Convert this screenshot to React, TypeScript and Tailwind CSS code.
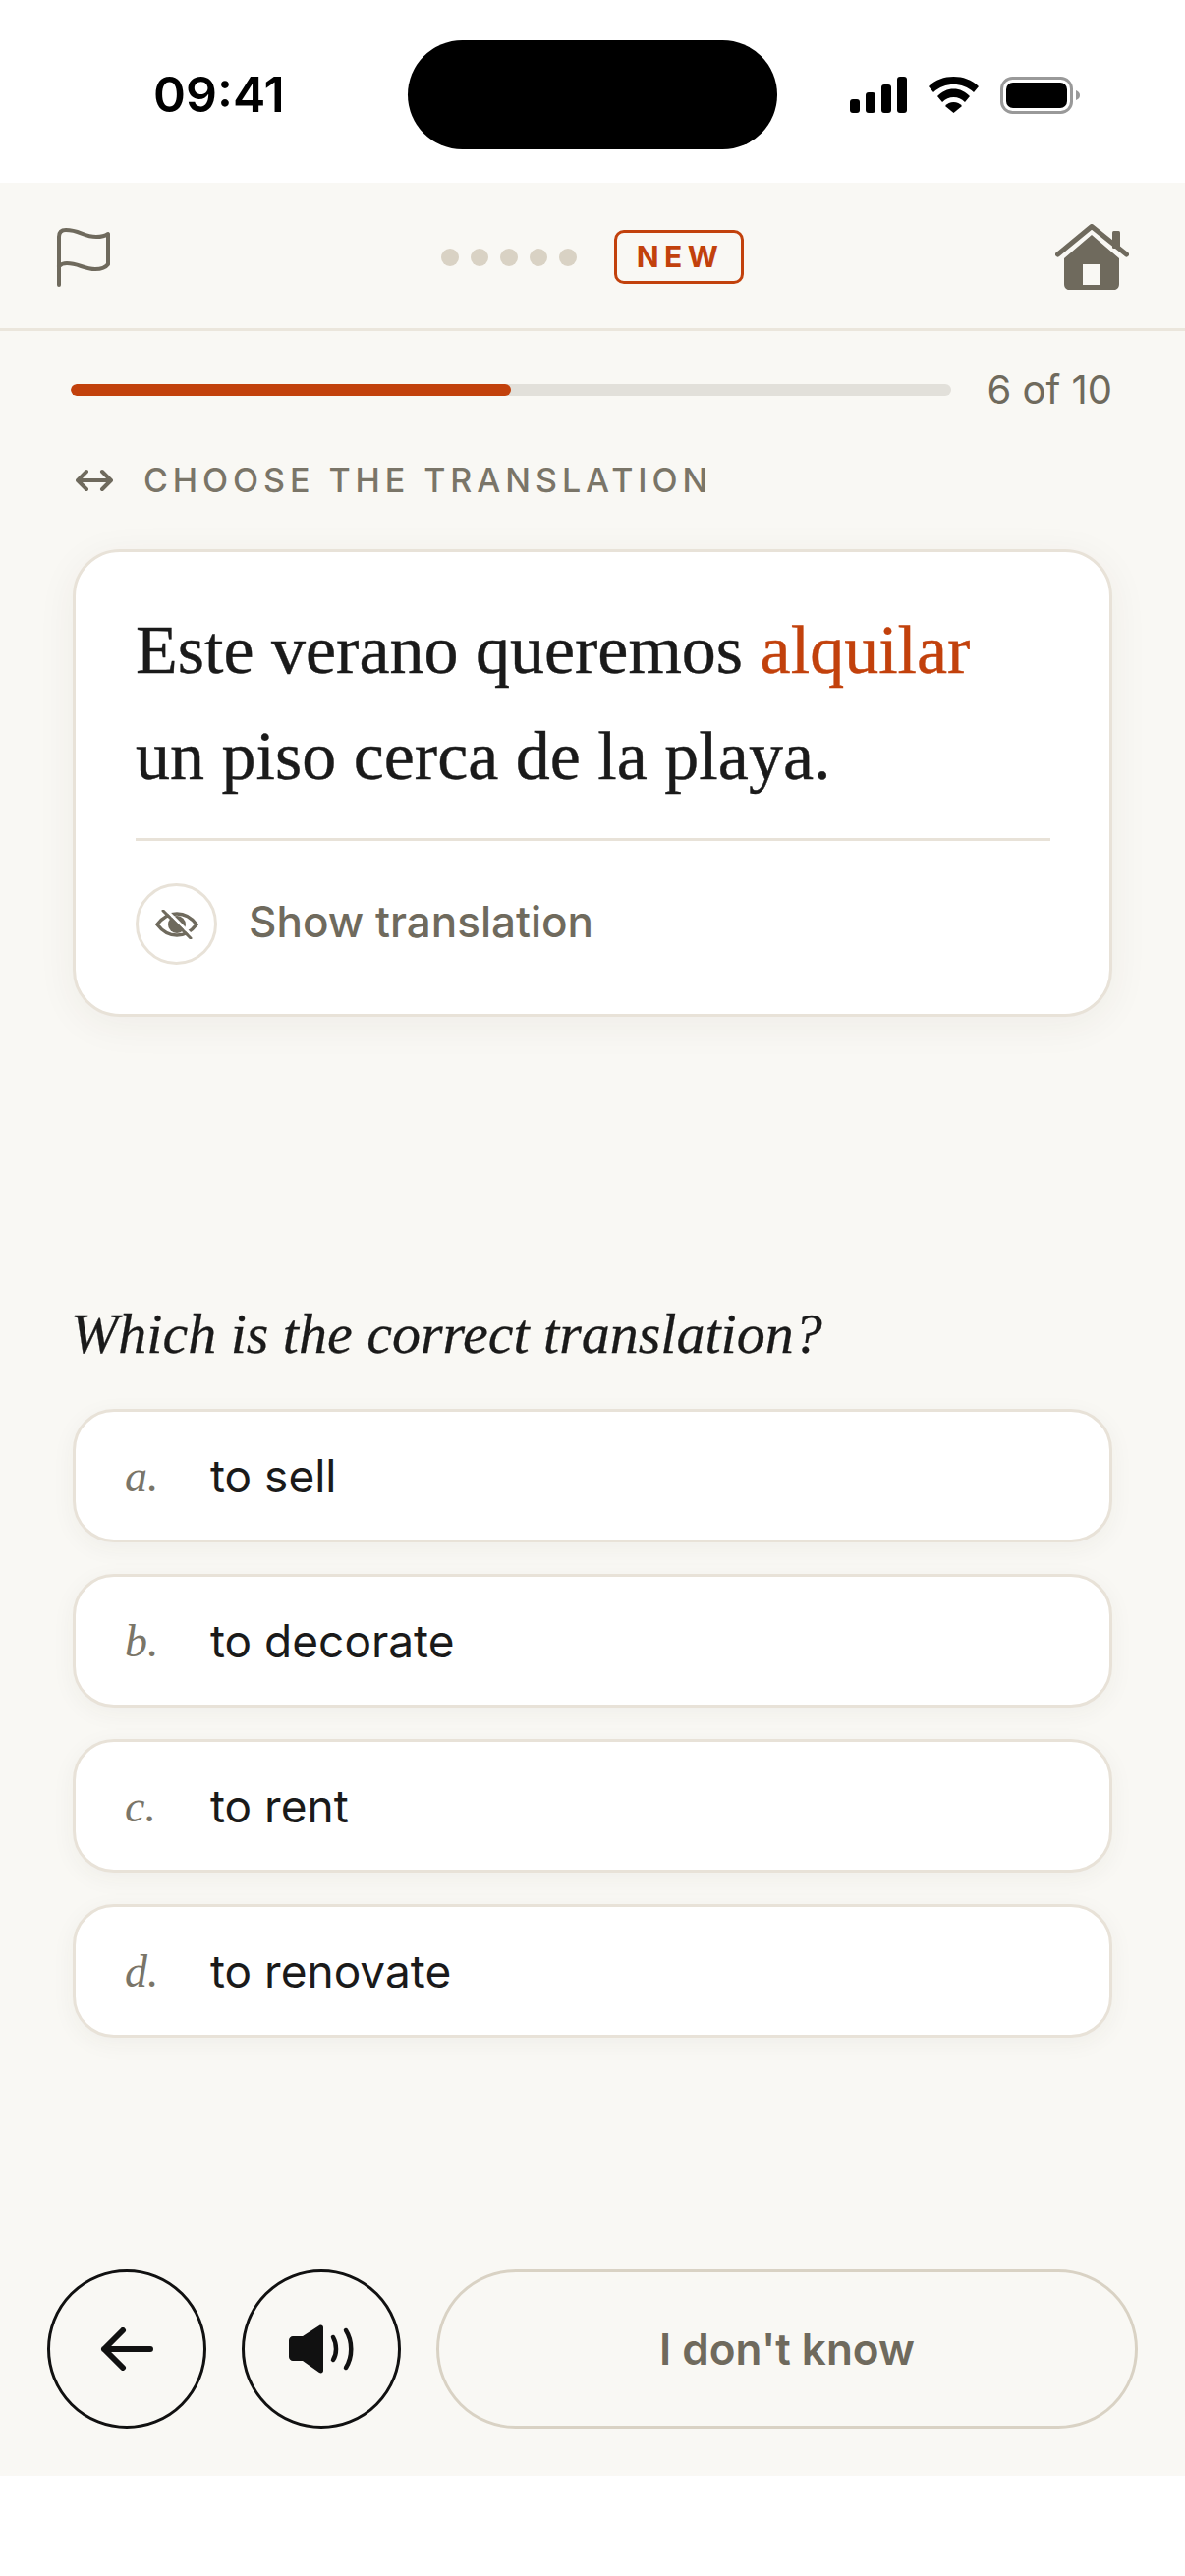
const options = [
  { label: 'a.', text: 'to sell' },
  { label: 'b.', text: 'to decorate' },
  { label: 'c.', text: 'to rent' },
  { label: 'd.', text: 'to renovate' },
]

export default function App() {
  return (
    <div className="w-[1206px] h-[2622px] bg-white font-['Inter',sans-serif] overflow-hidden">
      <StatusBar />
      <div className="h-[2334px] bg-[#f9f8f4] flex flex-col">
        {/* top bar */}
        <div className="h-[151px] shrink-0 border-b-[3px] border-[#ebe6dc] flex items-center justify-between pl-[57px] pr-[57px] pt-[3px]">
          <FlagIcon />
          <div className="flex items-center gap-[38px] ml-[18px]">
            <div className="flex gap-[12px]">
              <span className="w-[18px] h-[18px] rounded-full bg-[#d9d2c4]" />
              <span className="w-[18px] h-[18px] rounded-full bg-[#d9d2c4]" />
              <span className="w-[18px] h-[18px] rounded-full bg-[#d9d2c4]" />
              <span className="w-[18px] h-[18px] rounded-full bg-[#d9d2c4]" />
              <span className="w-[18px] h-[18px] rounded-full bg-[#d9d2c4]" />
            </div>
            <div className="w-[132px] h-[55px] flex items-center justify-center rounded-[10px] border-[3px] border-[#c2410c] text-[#c2410c] text-[30px] font-bold tracking-[0.18em] pl-[3px]">
              NEW
            </div>
          </div>
          <HomeIcon />
        </div>

        {/* progress */}
        <div className="flex items-center gap-[36px] pl-[72px] pr-[74px] mt-[38px]">
          <div className="flex-1 h-[12px] rounded-full bg-[#e2e0da] overflow-hidden">
            <div className="w-1/2 h-full rounded-full bg-[#c2410c]" />
          </div>
          <span className="text-[40px] leading-[44px] text-[#6f6a5d]">6 of 10</span>
        </div>

        {/* label */}
        <div className="flex items-center gap-[31px] pl-[77px] mt-[50px]">
          <SwapIcon />
          <span className="text-[34px] leading-[40px] font-medium tracking-[0.145em] text-[#7a7568]">CHOOSE THE TRANSLATION</span>
        </div>

        {/* sentence card */}
        <div className="mx-[74px] mt-[50px] h-[476px] rounded-[48px] border-[3px] border-[#e8e2d8] bg-white shadow-[0_8px_40px_rgba(60,50,30,0.06)] pl-[61px] pr-[60px] pt-[46px]">
          <p className="font-['Liberation_Serif',serif] text-[70px] leading-[108px] text-[#1a1a1a] [-webkit-text-stroke-width:0.4px]">
            Este verano queremos <span className="text-[#c2410c]">alquilar</span><br />un piso cerca de la playa.
          </p>
          <div className="h-[3px] bg-[#e8e2d8] mt-[29px]" />
          <div className="flex items-center gap-[32px] mt-[43px]">
            <div className="w-[83px] h-[83px] rounded-full border-[3px] border-[#e8e2d8] flex items-center justify-center">
              <EyeOffIcon />
            </div>
            <span className="text-[44px] leading-[54px] font-medium text-[#6f6a5d] pb-[5px]">Show translation</span>
          </div>
        </div>

        {/* question */}
        <p className="font-['Liberation_Serif',serif] italic text-[58px] leading-[70px] text-[#1a1a1a] pl-[72px] mt-[288px] [-webkit-text-stroke-width:0.3px]">
          Which is the correct translation?
        </p>

        <div className="flex flex-col gap-[32px] mx-[74px] mt-[41px]">
          {options.map((o) => (
            <div key={o.label} className="h-[136px] rounded-[42px] border-[3px] border-[#e8e2d8] bg-white shadow-[0_6px_24px_rgba(60,50,30,0.05)] flex items-center pl-[50px]">
              <span className="w-[87px] font-['Liberation_Serif',serif] italic text-[46px] text-[#7a7568]">{o.label}</span>
              <span className="text-[46px] leading-[56px] text-[#1a1a1a]">{o.text}</span>
            </div>
          ))}
        </div>

        {/* bottom actions */}
        <div className="flex items-center gap-[36px] pl-[48px] pr-[48px] mt-auto mb-[48px]">
          <button className="w-[162px] h-[162px] shrink-0 rounded-full border-[3px] border-[#111111] flex items-center justify-center">
            <BackIcon />
          </button>
          <button className="w-[162px] h-[162px] shrink-0 rounded-full border-[3px] border-[#111111] flex items-center justify-center">
            <SpeakerIcon />
          </button>
          <button className="flex-1 h-[162px] rounded-full border-[3px] border-[#d9d2c4] text-[44px] font-semibold text-[#6f6a5d]">
            I don't know
          </button>
        </div>
      </div>
    </div>
  )
}

function StatusBar() {
  return (
    <div className="h-[186px] flex items-start pt-[41px] pl-[156px]">
      <span className="w-[259px] h-[111px] flex items-center text-[50px] font-semibold text-black">09:41</span>
      <div className="w-[376px] h-[111px] rounded-full bg-black" />
      <div className="flex items-center gap-[22px] ml-[74px] h-[111px]">
        <svg width="58" height="37" viewBox="0 0 58 37" fill="#000">
          <rect x="0" y="23" width="10" height="14" rx="3" />
          <rect x="16" y="16" width="10" height="21" rx="3" />
          <rect x="32" y="8" width="10" height="29" rx="3" />
          <rect x="48" y="0" width="10" height="37" rx="3" />
        </svg>
        <svg width="51" height="37" viewBox="0 0 51 37" fill="#000">
          <path d="M0 10C7 3 16 0 25.500 0S44 3 51 10L46 16C40 10.500 33 8 25.500 8S11 10.500 5 16Z" />
          <path d="M9 20C14 15 19 12.500 25.500 12.500S37 15 42 20L37 26C33.500 22.500 30 21 25.500 21S17.500 22.500 14 26Z" />
          <path d="M17 30C19 27.500 22 26 25.500 26S32 27.500 34 30L25.500 37Z" />
        </svg>
        <svg width="82" height="38" viewBox="0 0 82 38">
          <rect x="1.500" y="1.500" width="71" height="35" rx="11" fill="none" stroke="#999" strokeWidth="3" />
          <rect x="6" y="6" width="62" height="26" rx="7" fill="#000" />
          <path d="M77 14C80 15 81 17 81 19S80 23 77 24Z" fill="#999" />
        </svg>
      </div>
    </div>
  )
}

function FlagIcon() {
  return (
    <svg width="56" height="60" viewBox="0 0 56 60" fill="none" stroke="#6f6a5d" strokeWidth="4" strokeLinecap="round" strokeLinejoin="round">
      <path d="M3 58V9C3 4 6 2 10 2C24 2 28 9 41 9C46 9 50 8 53 6V37C50 41 45 42 40 42C28 42 23 36 11 36C7 36 5 37 3 39" />
    </svg>
  )
}

function HomeIcon() {
  return (
    <svg width="75" height="67" viewBox="0 0 75 67" fill="#6f6a5d">
      <path d="M2.500 31L37 2.500L72.500 31" fill="none" stroke="#6f6a5d" strokeWidth="5" strokeLinecap="round" strokeLinejoin="round" />
      <rect x="58" y="7" width="8" height="18" rx="1.500" />
      <path fillRule="evenodd" d="M37 11L65 35V61C65 64.500 63 67 60 67H14C11 67 9 64.500 9 61V35ZM28 41V62H46V41Z" />
    </svg>
  )
}

function SwapIcon() {
  return (
    <svg width="38" height="24" viewBox="0 0 38 24" fill="none" stroke="#6f6a5d" strokeWidth="4" strokeLinecap="round" strokeLinejoin="round">
      <path d="M3 12H35M11 3L2 12L11 21M27 3L36 12L27 21" />
    </svg>
  )
}

function EyeOffIcon() {
  return (
    <svg width="44" height="30" viewBox="0 0 44 30" fill="none" strokeLinecap="round">
      <path d="M2 15C8 7 15 4 22 4C29 4 36 7 42 15C36 23 29 26 22 26C15 26 8 23 2 15Z" stroke="#6f6a5d" strokeWidth="3.500" />
      <circle cx="22" cy="15" r="9" fill="#6f6a5d" />
      <path d="M11 0L39 28" stroke="#fff" strokeWidth="3" />
      <path d="M8 1L36 29" stroke="#6f6a5d" strokeWidth="3" />
    </svg>
  )
}

function BackIcon() {
  return (
    <svg width="54" height="44" viewBox="0 0 54 44" fill="none" stroke="#111111" strokeWidth="6" strokeLinecap="round" strokeLinejoin="round">
      <path d="M4 22H51M23 3L4 22L23 41" />
    </svg>
  )
}

function SpeakerIcon() {
  return (
    <svg width="67" height="50" viewBox="0 0 67 50" fill="none">
      <path d="M4 12H14L31 1C33 0 35 1 35 3V47C35 49 33 50 31 49L14 37H4C2 37 0 35 0 33V16C0 14 2 12 4 12Z" fill="#111111" />
      <path d="M45 13C49 20 49 30 45 36" stroke="#111111" strokeWidth="4.500" strokeLinecap="round" />
      <path d="M58 6C65 17 65 33 58 44" stroke="#111111" strokeWidth="4.500" strokeLinecap="round" />
    </svg>
  )
}
